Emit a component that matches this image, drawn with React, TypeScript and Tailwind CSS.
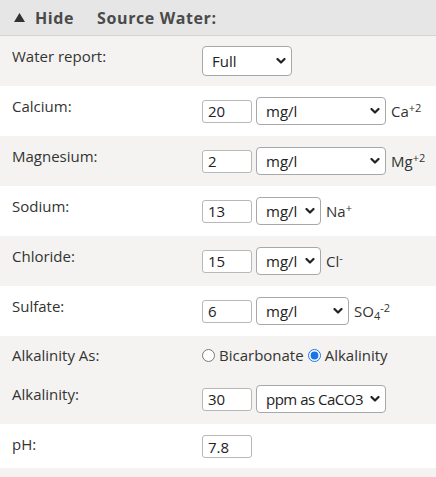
import React from 'react';

function Chevron() {
  return (
    <svg
      className="pointer-events-none absolute right-[6px] top-1/2 -translate-y-1/2"
      width="10"
      height="7"
      viewBox="0 0 10 7"
    >
      <path d="M1.5 1.5 L5 5 L8.5 1.5" fill="none" stroke="#222" strokeWidth="2.2" strokeLinecap="round" strokeLinejoin="round" />
    </svg>
  );
}

function Dropdown({ value, options, className }: { value: string; options: string[]; className: string }) {
  return (
    <div className={`relative ${className}`}>
      <select
        defaultValue={value}
        className="w-full h-full appearance-none bg-white border border-[#a8a8a8] rounded-[4px] pl-[9px] pr-[12px] text-[15px] text-[#222] outline-none"
      >
        {options.map((o) => (
          <option key={o}>{o}</option>
        ))}
      </select>
      <Chevron />
    </div>
  );
}

function NumInput({ value }: { value: string }) {
  return (
    <input
      defaultValue={value}
      className="w-[50px] h-[23px] bg-white border border-[#b8b8b8] rounded-[3px] px-[5px] text-[15px] text-[#222] outline-none"
    />
  );
}

const units = ['mg/l', 'ppm', 'meq/l'];

function IonRow({ label, value, selectW, gray, ion }: { label: string; value: string; selectW: string; gray?: boolean; ion: React.ReactNode }) {
  return (
    <div className={`flex py-[10px] ${gray ? 'bg-[#f4f3f1]' : 'bg-white'}`}>
      <div className="w-[202px] pl-[12px] leading-[20px]">{label}</div>
      <div className="flex items-center h-[30px] gap-[4px]">
        <NumInput value={value} />
        <Dropdown value="mg/l" options={units} className={`h-[28px] ${selectW}`} />
        <span className="leading-[20px] ml-[1px]">{ion}</span>
      </div>
    </div>
  );
}

export default function App() {
  return (
    <div className="w-[436px] h-[477px] overflow-hidden bg-[#f4f3f1] font-['Open_Sans',sans-serif] text-[15px] text-[#333]">
      {/* header bar */}
      <div className="h-[36px] bg-[#e6e6e6] border-b border-[#d3d3d3] flex items-center pl-[14px] text-[16px] font-bold text-[#4a4a4a] tracking-[0.6px]">
        <svg width="11" height="9" viewBox="0 0 11 9" className="mr-[10px] mt-[-1px]">
          <path d="M5.5 0 L11 9 L0 9 Z" fill="#333" />
        </svg>
        <span>Hide</span>
        <span className="ml-[23px]">Source Water:</span>
      </div>

      <div className="flex py-[10px] bg-[#f4f3f1]">
        <div className="w-[202px] pl-[12px] leading-[20px]">Water report:</div>
        <Dropdown value="Full" options={['Full', 'Simple']} className="h-[30px] w-[90px]" />
      </div>

      <IonRow label="Calcium:" value="20" selectW="w-[130px]" ion={<>Ca<sup className="text-[11px]">+2</sup></>} />
      <IonRow label="Magnesium:" value="2" selectW="w-[130px]" gray ion={<>Mg<sup className="text-[11px]">+2</sup></>} />
      <IonRow label="Sodium:" value="13" selectW="w-[65px]" ion={<>Na<sup className="text-[11px]">+</sup></>} />
      <IonRow label="Chloride:" value="15" selectW="w-[65px]" gray ion={<>Cl<sup className="text-[11px]">-</sup></>} />
      <IonRow label="Sulfate:" value="6" selectW="w-[93px]" ion={<>SO<sub className="text-[11px]">4</sub><sup className="text-[11px]">-2</sup></>} />

      {/* alkalinity group */}
      <div className="bg-[#f4f3f1] pt-[9px] pb-[10px]">
        <div className="flex items-center h-[20px]">
          <div className="w-[202px] pl-[12px] leading-[20px]">Alkalinity As:</div>
          <label className="flex items-center">
            <input type="radio" name="alk" className="w-[13px] h-[13px] m-0 mr-[4px]" />
            Bicarbonate
          </label>
          <label className="flex items-center ml-[4px]">
            <input type="radio" name="alk" defaultChecked className="w-[13px] h-[13px] m-0 mr-[4px] accent-[#1a73e8]" />
            Alkalinity
          </label>
        </div>
        <div className="flex mt-[19px]">
          <div className="w-[202px] pl-[12px] leading-[20px]">Alkalinity:</div>
          <div className="flex items-center h-[30px] gap-[4px]">
            <NumInput value="30" />
            <Dropdown value="ppm as CaCO3" options={['ppm as CaCO3', 'mg/l']} className="h-[28px] w-[130px] tracking-[-0.5px]" />
          </div>
        </div>
      </div>

      <div className="flex pt-[10px] pb-[10px] bg-white">
        <div className="w-[202px] pl-[12px] leading-[20px]">pH:</div>
        <div className="flex items-center h-[24px] pt-[1px]">
          <NumInput value="7.8" />
        </div>
      </div>
    </div>
  );
}
